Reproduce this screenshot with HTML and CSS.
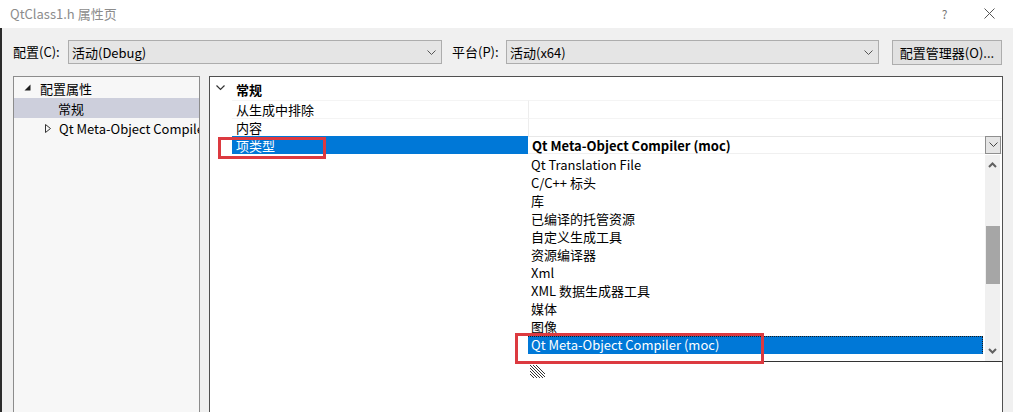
FILE: index.html
```html
<!DOCTYPE html>
<html lang="zh-CN">
<head>
<meta charset="utf-8">
<title>QtClass1.h 属性页</title>
<link rel="stylesheet" href="styles.css">
</head>
<body>
<div class="window">
  <div class="titlebar">
    <span class="title">QtClass1.h 属性页</span>
    <span class="help">?</span>
    <svg class="close" width="11" height="11" viewBox="0 0 11 11"><path d="M0.5 0.5 L10.5 10.5 M10.5 0.5 L0.5 10.5" stroke="#555" stroke-width="1" fill="none"/></svg>
  </div>
  <div class="content">
    <div class="toolbar">
      <span class="label label-config">配置(C):</span>
      <div class="combo combo-config">
        <span>活动(Debug)</span>
        <svg class="chev" width="9" height="5" viewBox="0 0 9 5"><path d="M0.5 0.5 L4.5 4.5 L8.5 0.5" stroke="#555" fill="none"/></svg>
      </div>
      <span class="label label-platform">平台(P):</span>
      <div class="combo combo-platform">
        <span>活动(x64)</span>
        <svg class="chev" width="9" height="5" viewBox="0 0 9 5"><path d="M0.5 0.5 L4.5 4.5 L8.5 0.5" stroke="#555" fill="none"/></svg>
      </div>
      <div class="button">配置管理器(O)...</div>
    </div>
    <div class="main">
      <div class="tree">
        <div class="tree-row row-root">
          <svg class="tri-filled" width="7" height="7" viewBox="0 0 7 7"><polygon points="6.5,0.5 6.5,6.5 0.5,6.5" fill="#1e1e1e"/></svg>
          <span>配置属性</span>
        </div>
        <div class="tree-row row-general">常规</div>
        <div class="tree-row row-qt">
          <svg class="tri-open" width="6" height="9" viewBox="0 0 6 9"><polygon points="0.5,0.5 5.5,4.5 0.5,8.5" fill="none" stroke="#333" stroke-width="1"/></svg>
          <span class="tree-text">Qt Meta-Object Compiler (moc)</span>
        </div>
      </div>
      <div class="grid">
        <div class="cat-row">
          <svg class="cat-chev" width="9" height="6" viewBox="0 0 9 6"><path d="M0.5 0.5 L4.5 4.5 L8.5 0.5" stroke="#333" stroke-width="1.2" fill="none"/></svg>
          <span class="cat-name">常规</span>
        </div>
        <div class="prop-row">
          <span class="indent"></span>
          <span class="name">从生成中排除</span>
          <span class="value"></span>
        </div>
        <div class="prop-row">
          <span class="indent"></span>
          <span class="name">内容</span>
          <span class="value"></span>
        </div>
        <div class="prop-row selected">
          <span class="indent"></span>
          <span class="name">项类型</span>
          <div class="value value-combo">
            <span class="value-text">Qt Meta-Object Compiler (moc)</span>
            <span class="drop-btn">
              <svg width="9" height="5" viewBox="0 0 9 5"><path d="M0.5 0.5 L4.5 4.5 L8.5 0.5" stroke="#444" fill="none"/></svg>
            </span>
          </div>
        </div>

        <div class="popup">
          <div class="list">
            <div class="items">
              <div class="item">Qt Translation File</div>
              <div class="item">C/C++ 标头</div>
              <div class="item">库</div>
              <div class="item">已编译的托管资源</div>
              <div class="item">自定义生成工具</div>
              <div class="item">资源编译器</div>
              <div class="item">Xml</div>
              <div class="item">XML 数据生成器工具</div>
              <div class="item">媒体</div>
              <div class="item">图像</div>
              <div class="item item-selected">Qt Meta-Object Compiler (moc)</div>
              <div class="item item-next">Qt User Interface Compiler (uic)</div>
            </div>
            <div class="scrollbar">
              <div class="sb-btn">
                <svg width="9" height="6" viewBox="0 0 9 6"><path d="M1 5 L4.5 1.5 L8 5" stroke="#606060" stroke-width="2" fill="none"/></svg>
              </div>
              <div class="sb-space-top"></div>
              <div class="sb-thumb"></div>
              <div class="sb-space"></div>
              <div class="sb-btn">
                <svg width="9" height="6" viewBox="0 0 9 6"><path d="M1 1 L4.5 4.5 L8 1" stroke="#606060" stroke-width="2" fill="none"/></svg>
              </div>
            </div>
          </div>
          <div class="popup-foot">
            <svg width="15" height="14" viewBox="0 0 15 14">
              <path d="M0 1 L13 14 M0 4 L10 14 M0 7 L7 14 M0 10 L4 14 M3 1 L15 13 M6 1 L15 10" stroke="#333" stroke-width="1" fill="none"/>
            </svg>
          </div>
        </div>
      </div>
    </div>
  </div>
  <div class="mark mark-name"></div>
  <div class="mark mark-item"></div>
</div>
</body>
</html>
```
FILE: styles.css
```css
* {
  box-sizing: border-box;
  margin: 0;
  padding: 0;
}

html, body {
  width: 1013px;
  height: 412px;
  overflow: hidden;
}

body {
  font-family: "Noto Sans CJK SC", "Noto Sans", sans-serif;
  font-size: 13px;
  color: #000;
  background: #f0f0f0;
}

svg {
  flex: none;
}

.window {
  position: relative;
  width: 1013px;
  height: 412px;
  display: flex;
  flex-direction: column;
  overflow: hidden;
}

/* title bar */
.titlebar {
  flex: none;
  height: 28px;
  background: #fff;
  display: flex;
  align-items: center;
  padding: 0 18px 2px 10px;
}

.title {
  flex: 1;
  color: #8c8c8c;
}

.help {
  width: 11px;
  margin-right: 34px;
  color: #777;
  font-size: 12px;
  text-align: center;
}

.close {
  display: block;
}

/* content */
.content {
  flex: 1;
  min-height: 0;
  display: flex;
  flex-direction: column;
  border-left: 2px solid #2b2b2b;
  background: #f0f0f0;
}

.toolbar {
  flex: none;
  display: flex;
  align-items: center;
  height: 36px;
  padding: 12px 0 0 11px;
}

.label {
  line-height: 24px;
  white-space: nowrap;
}

.label-config {
  width: 55px;
}

.label-platform {
  width: 54px;
  margin-left: 10px;
}

.combo {
  height: 24px;
  display: flex;
  align-items: center;
  padding-left: 3px;
  border: 1px solid #adadad;
  background: #e5e5e5;
}

.combo .chev {
  margin-left: auto;
  margin-right: 5px;
}

.combo-config {
  width: 374px;
}

.combo-platform {
  width: 373px;
}

.button {
  width: 110px;
  height: 25px;
  margin-left: 13px;
  border: 1px solid #adadad;
  background: #e1e1e1;
  display: flex;
  align-items: center;
  justify-content: center;
  white-space: nowrap;
}

/* main area */
.main {
  flex: 1;
  min-height: 0;
  display: flex;
  align-items: flex-start;
  margin-top: 12px;
  padding-left: 11px;
}

.tree {
  flex: none;
  width: 187px;
  height: 360px;
  border: 1px solid #8c8c8c;
  background: #f7f7f7;
  padding-top: 1px;
  overflow: hidden;
}

.tree-row {
  height: 20px;
  display: flex;
  align-items: center;
  white-space: nowrap;
  overflow: hidden;
}

.row-root {
  padding-left: 10px;
}

.row-root .tri-filled {
  margin-right: 9px;
  margin-top: -1px;
}

.row-general {
  padding-left: 44px;
  background: #cdcfdc;
}

.row-qt {
  padding-left: 31px;
}

.row-qt .tri-open {
  margin-right: 8px;
}

.tree-text {
  flex: none;
}

/* property grid */
.grid {
  position: relative;
  flex: none;
  width: 794px;
  height: 360px;
  margin-left: 9px;
  border: 1px solid #505050;
  background: #fff;
}

.cat-row {
  height: 23px;
  display: flex;
  align-items: center;
  padding-top: 2px;
}

.cat-chev {
  margin-left: 6px;
  margin-right: 11px;
  margin-top: -3px;
}

.cat-name {
  font-weight: bold;
}

.prop-row {
  height: 18px;
  display: flex;
  align-items: stretch;
}

.indent {
  width: 22px;
  flex: none;
}

.name {
  width: 296px;
  flex: none;
  padding-left: 4px;
  white-space: nowrap;
  border-top: 1px solid #f4f4f4;
  line-height: 17px;
}

.value {
  flex: 1;
  border-left: 1px solid #ededed;
  border-top: 1px solid #f4f4f4;
}

.selected .name {
  background: #0078d7;
  color: #fff;
  border-top-color: #0078d7;
}

.value-combo {
  display: flex;
  align-items: center;
  border-left: none;
  border-top: 1px solid #e8e8e8;
  border-bottom: 1px solid #f0f0f0;
  padding-left: 4px;
}

.value-text {
  flex: 1;
  font-weight: bold;
  white-space: nowrap;
}

.drop-btn {
  width: 16px;
  height: 18px;
  margin-top: -1px;
  margin-right: 1px;
  border: 1px solid #8f8f8f;
  background: #e5e5e5;
  display: flex;
  align-items: center;
  justify-content: center;
}

/* dropdown popup */
.popup {
  position: absolute;
  left: 318px;
  top: 78px;
  width: 474px;
  background: #fff;
}

.list {
  height: 207px;
  display: flex;
  border-bottom: 1px solid #333;
}

.items {
  flex: 1;
  padding-top: 1px;
  overflow: hidden;
}

.item {
  height: 18px;
  line-height: 18px;
  padding-left: 3px;
  white-space: nowrap;
}

.item-selected {
  margin-right: 2px;
  background: #0078d7;
  color: #fff;
  border: 1px dotted #1a1a1a;
  border-left: none;
  border-bottom-color: #0078d7;
  line-height: 16px;
}

.item-next {
  padding-top: 4px;
  color: #555;
}

.scrollbar {
  flex: none;
  width: 15px;
  margin-right: 2px;
  background: #f0f0f0;
  display: flex;
  flex-direction: column;
}

.sb-btn {
  height: 20px;
  display: flex;
  align-items: center;
  justify-content: center;
}

.sb-space-top {
  height: 51px;
}

.sb-thumb {
  height: 58px;
  margin-left: 1px;
  background: #a6a6a6;
}

.sb-space {
  flex: 1;
}

.popup-foot {
  height: 20px;
  padding: 2px 0 0 2px;
}

.popup-foot svg {
  display: block;
}

/* annotation marks */
.mark {
  position: absolute;
  border: 3px solid #dc3a40;
}

.mark-name {
  left: 218px;
  top: 137px;
  width: 108px;
  height: 22px;
}

.mark-item {
  left: 515px;
  top: 333px;
  width: 249px;
  height: 31px;
}
```
